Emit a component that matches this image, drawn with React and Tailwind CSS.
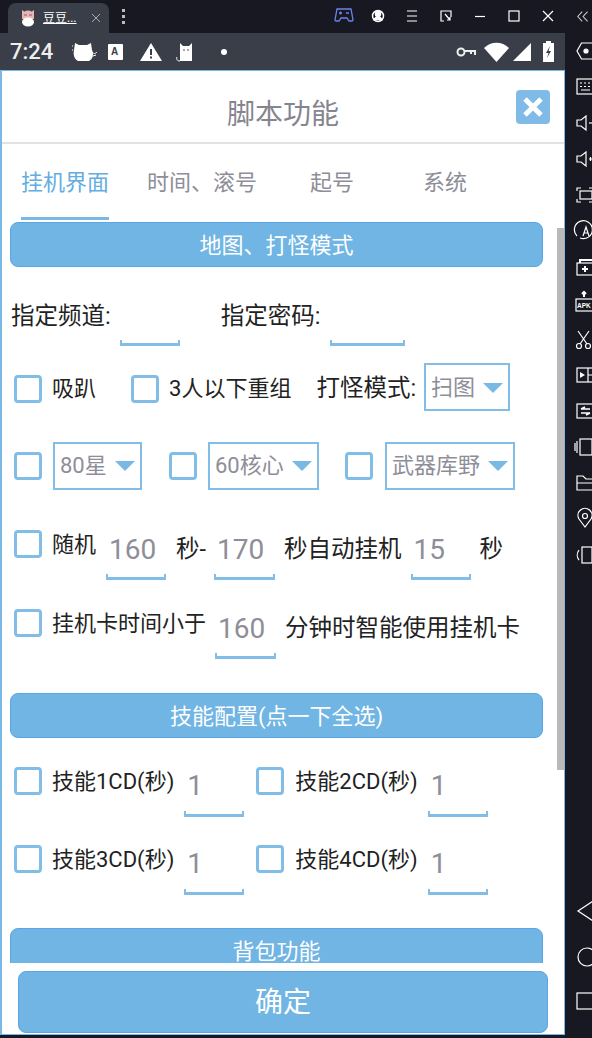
import React from "react";

const blue = "#70b5e3";

function Check({ className = "" }) {
  return <div className={`h-[28px] w-[28px] shrink-0 rounded-[4px] border-[3px] border-[#82bde8] bg-white ${className}`} />;
}

function Label({ children, className = "" }) {
  return <span className={`shrink-0 whitespace-nowrap leading-[30px] text-[#222] ${className}`}>{children}</span>;
}

// underlined input with the small ticks on both ends
function Field({ width, text, pad = "pt-[1px]", className = "" }) {
  return (
    <div className={`flex h-[50px] shrink-0 flex-col justify-end ${width} ${className}`}>
      <div className={`flex-1 pl-[3px] text-[28px] leading-[38px] text-[#8e8e99] ${pad}`}>{text}</div>
      <div className="h-[6px] border-x-2 border-b-[3px] border-[#82bde8]" />
    </div>
  );
}

function Select({ width, text, className = "" }) {
  return (
    <div className={`flex h-[48px] shrink-0 items-center justify-between border-[2px] border-[#82bde8] pl-[5px] pr-[5px] ${width} ${className}`}>
      <span className="whitespace-nowrap text-[22px] text-[#8e8e99]">{text}</span>
      <div className="mt-[1px] h-0 w-0 border-x-[10px] border-t-[10px] border-x-transparent border-t-[#7ab8e5]" />
    </div>
  );
}

function Section({ children, className = "" }) {
  return (
    <div className={`flex h-[45px] w-[533px] shrink-0 items-center justify-center rounded-[8px] border border-[#5aa5e5] pt-[1px] text-[22px] text-white ${className}`} style={{ background: blue }}>
      {children}
    </div>
  );
}

function SideIcon({ children }) {
  return (
    <svg width="27" height="36" viewBox="0 0 27 36" fill="none" stroke="#fff" strokeWidth="1.2">
      {children}
    </svg>
  );
}

const sideIcons = [
  <g key="a"><path d="M28 10H16.5L12 18l4.5 8H28" /><circle cx="21" cy="18" r="2" fill="#fff" /></g>,
  <g key="b"><rect x="12" y="10" width="16" height="15" /><path d="M15 14h2M19 14h2M23 14h2M15 17.500h2M19 17.500h2M23 17.500h2M16 21h9" /></g>,
  <g key="c"><path d="M12 15h4l5-4v14l-5-4h-4z" /><path d="M24 18h3" /></g>,
  <g key="d"><path d="M12 15h4l5-4v14l-5-4h-4z" /><path d="M24 18h3M25.5 16v4" /></g>,
  <g key="e"><path d="M12 14v-3h4M12 22v3h4M24 11h3M24 25h3" /><rect x="15" y="14" width="12" height="8" /></g>,
  <g key="f"><path d="M12 23a9 9 0 1 1 3 2" /><path d="M18 23l3-9 3 9M19 20h4" /></g>,
  <g key="g"><rect x="12" y="14" width="16" height="12" /><path d="M15 14v-3h12M20 17v6M17 20h6" strokeWidth="2" /></g>,
  <g key="h"><rect x="11" y="14" width="17" height="12" /><path d="M19 12V7M17 9l2-2 2 2" strokeWidth="2" /><text x="12" y="23" fill="#fff" stroke="none" fontSize="6.5" fontFamily="Liberation Sans" fontWeight="700">APK</text></g>,
  <g key="i"><circle cx="14" cy="25" r="2.5" /><circle cx="23" cy="25" r="2.5" /><path d="M15 23l9-13M22 23l-9-13" /></g>,
  <g key="j"><rect x="12" y="11" width="16" height="14" /><path d="M23 11v14M23 18h4" /><path d="M15 15l5 3-5 3z" fill="#fff" stroke="none" /></g>,
  <g key="k"><rect x="12" y="11" width="16" height="14" /><path d="M16 16h9M20 14l-4 2M16 20h9M21 22l4-2" strokeWidth="1.6" /></g>,
  <g key="l"><rect x="15" y="10" width="12" height="16" /><path d="M12 12v12M10 14v8" /></g>,
  <g key="m"><path d="M12 11h6l3 3h7v11H12zM12 18h15" /></g>,
  <g key="n"><path d="M20 26l-6-8a7 7 0 1 1 12 0z" /><circle cx="20" cy="15" r="2.5" /></g>,
  <g key="o"><rect x="17" y="10" width="10" height="16" /><path d="M14 13a8 8 0 0 0 0 10" /></g>,
];

function TopBar() {
  const c = "#fff";
  return (
    <div className="flex h-[33px] shrink-0 items-center bg-[#171821]">
      <div className="ml-[8px] flex h-[30px] w-[101px] items-center self-end rounded-t-[8px] bg-[#3a3e48] pl-[13px] pr-[8px]">
        <svg width="14" height="18" viewBox="0 0 14 18">
          <path d="M1 1l3 2h6l3-2v9H1z" fill="#e8b5b0" />
          <ellipse cx="7" cy="6.500" rx="5.500" ry="5" fill="#e8b5b0" />
          <path d="M3 6h3M8 6h3" stroke="#8a5a8a" strokeWidth="1.2" />
          <ellipse cx="7" cy="13" rx="6" ry="4.500" fill="#fff" />
        </svg>
        <span className="ml-[8px] text-[12px] leading-none text-white underline">豆豆...</span>
        <svg className="ml-auto" width="10" height="10" viewBox="0 0 10 10" stroke="#aaa" strokeWidth="1"><path d="M1 1l8 8M9 1l-8 8" /></svg>
      </div>
      <div className="ml-[13px] flex flex-col gap-[3px]">
        <div className="h-[3px] w-[3px] bg-[#bbb]" />
        <div className="h-[3px] w-[3px] bg-[#bbb]" />
        <div className="h-[3px] w-[3px] bg-[#bbb]" />
      </div>
      <div className="ml-auto flex items-center">
        <svg width="34" height="33" viewBox="0 0 34 33" fill="none" stroke="#6b84e8" strokeWidth="1.3">
          <path d="M10 9h14l2 11-1 1h-3l-2-3h-6l-2 3H9l-1-1z" />
          <path d="M12 13h3M13.500 11.500v3M19 13h3" />
        </svg>
        <svg width="34" height="33" viewBox="0 0 34 33" fill="none" stroke={c} strokeWidth="1.5">
          <circle cx="17" cy="16" r="5.500" />
          <circle cx="17" cy="14" r="2.500" fill={c} />
          <path d="M13 19.500a4.500 4.500 0 0 1 8 0z" fill={c} />
        </svg>
        <svg width="34" height="33" viewBox="0 0 34 33" fill="none" stroke={c} strokeWidth="1.2">
          <path d="M12 11h10M12 16h10M12 21h10" />
        </svg>
        <svg width="34" height="33" viewBox="0 0 34 33" fill="none" stroke={c} strokeWidth="1.2">
          <path d="M15 21h-3V11h10v6M16 14l5 6M21 17v3h-3" />
        </svg>
        <svg width="34" height="33" viewBox="0 0 34 33" fill="none" stroke={c} strokeWidth="1.2">
          <path d="M12 16.500h10" />
        </svg>
        <svg width="34" height="33" viewBox="0 0 34 33" fill="none" stroke={c} strokeWidth="1.2">
          <rect x="12" y="11" width="10" height="10" />
        </svg>
        <svg width="34" height="33" viewBox="0 0 34 33" fill="none" stroke={c} strokeWidth="1.2">
          <path d="M12 11l10 10M22 11L12 21" />
        </svg>
        <svg className="ml-[3px]" width="24" height="33" viewBox="0 0 27 33" fill="none" stroke="#ccc" strokeWidth="1.2">
          <path d="M16 11l-5 5.500 5 5.500M22 11l-5 5.500 5 5.500" />
        </svg>
      </div>
    </div>
  );
}

function StatusBar() {
  return (
    <div className="flex h-[37px] shrink-0 items-center bg-[#3a3e48] pl-[10px] text-white">
      <span className="w-[60px] text-[22px] font-medium text-[#eee]">7:24</span>
      <svg className="ml-[1px]" width="26" height="24" viewBox="0 0 26 24" fill="#fff">
        <path d="M4 3l4 2h8l4-2 1 7c2 4 1 9-3 11H7C3 19 2 14 3 10z" />
        <path d="M21 12c2 2 3 2 5 0M22 16l3-1M1 6h1M1 10h1" stroke="#fff" fill="none" />
      </svg>
      <svg className="ml-[11px]" width="16" height="18" viewBox="0 0 16 18">
        <rect width="15" height="16" rx="1" fill="#fff" y="1" />
        <text x="3" y="12" fontSize="10" fontWeight="700" fill="#3a3e48" fontFamily="Liberation Sans">A</text>
      </svg>
      <svg className="ml-[16px]" width="22" height="18" viewBox="0 0 22 18">
        <path d="M11 0l11 18H0z" fill="#fff" />
        <path d="M10 6h2v6h-2zM10 13.500h2v2h-2z" fill="#3a3e48" />
      </svg>
      <svg className="ml-[13px]" width="22" height="20" viewBox="0 0 22 20" fill="#fff">
        <path d="M5 1l3 3h6l3-3v18H5z" />
        <path d="M5 19c-3 0-4-2-3-4" stroke="#fff" fill="none" />
        <circle cx="9" cy="8" r=".8" fill="#3a3e48" />
        <circle cx="13" cy="8" r=".8" fill="#3a3e48" />
      </svg>
      <div className="ml-[24px] h-[6px] w-[6px] rounded-full bg-white" />
      <div className="ml-auto flex items-center pr-[11px]">
        <svg width="20" height="12" viewBox="0 0 20 12" fill="none" stroke="#eee" strokeWidth="2">
          <circle cx="5" cy="6" r="3.500" />
          <path d="M9 5h10v4M15 5v3" />
        </svg>
        <svg className="ml-[8px]" width="25" height="20" viewBox="0 0 25 20" fill="#fff">
          <path d="M0 6c7-7 18-7 25 0L12.500 20z" />
        </svg>
        <svg className="ml-[4px]" width="18" height="18" viewBox="0 0 18 18" fill="#fff">
          <path d="M18 0v18H0z" />
        </svg>
        <svg className="ml-[12px]" width="11" height="21" viewBox="0 0 11 21">
          <path d="M3 0h5v2h3v19H0V2h3z" fill="#fff" />
          <path d="M7 5l-4 7h2.500L4 17l4-7H5.500z" fill="#3a3e48" />
        </svg>
      </div>
    </div>
  );
}

export default function App() {
  return (
    <div className="flex h-[1038px] w-[592px] flex-col overflow-hidden bg-[#171821]" style={{ fontFamily: '"Roboto","Noto Sans CJK SC",sans-serif' }}>
      <TopBar />
      <div className="flex min-h-0 flex-1">
        <div className="flex w-[565px] shrink-0 flex-col">
          <StatusBar />
          <div className="relative flex h-[965px] shrink-0 flex-col border-y border-l-2 border-r border-[#7ab8e5] bg-white">
            {/* header */}
            <div className="relative flex h-[73px] shrink-0 items-center justify-center border-b-2 border-[#e2e2e2]">
              <span className="mt-[16px] text-[28px] text-[#85858f]">脚本功能</span>
              <div className="absolute right-[14px] top-[19px] flex h-[34px] w-[34px] items-center justify-center rounded-[4px] bg-[#7fbbe6]">
                <svg width="24" height="24" viewBox="0 0 24 24" stroke="#fff" strokeWidth="5"><path d="M4 4l16 16M20 4L4 20" /></svg>
              </div>
            </div>
            {/* tabs */}
            <div className="flex h-[76px] shrink-0 items-start pt-[21px] text-[22px] text-[#8e8e99]">
              <div className="ml-[19px] flex h-[55px] w-[88px] flex-col justify-between text-[#63ade0]">
                <span className="whitespace-nowrap leading-[36px]">挂机界面</span>
                <div className="h-[3px] bg-[#7ab8e5]" />
              </div>
              <span className="ml-[38px] whitespace-nowrap leading-[36px]">时间、滚号</span>
              <span className="ml-[53px] whitespace-nowrap leading-[36px]">起号</span>
              <span className="ml-[69px] whitespace-nowrap leading-[36px]">系统</span>
            </div>
            {/* scrolling form */}
            <div className="relative min-h-0 flex-1 overflow-hidden pl-[8px]">
              <Section className="mt-[2px]">地图、打怪模式</Section>

              <div className="mt-[29px] flex h-[50px] items-start">
                <Label className="ml-[1px] mt-[5px] text-[23.5px]">指定频道:</Label>
                <Field width="w-[60px]" className="ml-[9px]" />
                <Label className="ml-[41px] mt-[5px] text-[23.5px]">指定密码:</Label>
                <Field width="w-[75px]" className="ml-[10px]" />
              </div>

              <div className="mt-[17px] flex h-[48px] items-center">
                <Check className="ml-[4px] mt-[4px]" />
                <Label className="ml-[10px] mt-[4px] text-[22px]">吸趴</Label>
                <Check className="ml-[35px] mt-[4px]" />
                <Label className="ml-[10px] mt-[4px] text-[22px]">3人以下重组</Label>
                <Label className="ml-[25px] mt-[2px] text-[23.5px]">打怪模式:</Label>
                <Select width="w-[86px]" text="扫图" className="ml-[8px]" />
              </div>

              <div className="mt-[30px] flex h-[49px] items-center">
                <Check className="ml-[4px]" />
                <Select width="w-[89px]" text="80星" className="ml-[11px]" />
                <Check className="ml-[27px]" />
                <Select width="w-[111px]" text="60核心" className="ml-[11px]" />
                <Check className="ml-[26px]" />
                <Select width="w-[130px]" text="武器库野" className="ml-[12px]" />
              </div>

              <div className="mt-[40px] flex h-[50px] items-start">
                <Check className="ml-[4px]" />
                <Label className="ml-[10px] text-[22px]">随机</Label>
                <Field width="w-[60px]" text="160" className="ml-[10px]" />
                <Label className="ml-[10px] mt-[4px] text-[23.5px]">秒-</Label>
                <Field width="w-[61px]" text="170" className="ml-[8px]" />
                <Label className="ml-[9px] mt-[4px] text-[23.5px]">秒自动挂机</Label>
                <Field width="w-[60px]" text="15" className="ml-[9px]" />
                <Label className="ml-[9px] mt-[4px] text-[23.5px]">秒</Label>
              </div>

              <div className="mt-[29px] flex h-[50px] items-start">
                <Check className="ml-[4px]" />
                <Label className="ml-[10px] text-[22px]">挂机卡时间小于</Label>
                <Field width="w-[61px]" text="160" className="ml-[9px]" />
                <Label className="ml-[9px] mt-[4px] text-[23.5px]">分钟时智能使用挂机卡</Label>
              </div>

              <Section className="mt-[34px]">技能配置(点一下全选)</Section>

              <div className="mt-[29px] flex h-[50px] items-start">
                <Check className="ml-[4px]" />
                <Label className="ml-[10px] text-[22px]">技能1CD(秒)</Label>
                <Field width="w-[60px]" text="1" pad="pt-0" className="ml-[10px]" />
                <Check className="ml-[12px]" />
                <Label className="ml-[11px] text-[22px]">技能2CD(秒)</Label>
                <Field width="w-[60px]" text="1" pad="pt-0" className="ml-[10px]" />
              </div>

              <div className="mt-[28px] flex h-[50px] items-start">
                <Check className="ml-[4px]" />
                <Label className="ml-[10px] text-[22px]">技能3CD(秒)</Label>
                <Field width="w-[60px]" text="1" pad="pt-0" className="ml-[10px]" />
                <Check className="ml-[12px]" />
                <Label className="ml-[11px] text-[22px]">技能4CD(秒)</Label>
                <Field width="w-[60px]" text="1" pad="pt-0" className="ml-[10px]" />
              </div>

              <Section className="mt-[33px]">背包功能</Section>

              <div className="absolute right-0 top-[8px] h-[542px] w-[7px] bg-[#b9b9b9]" />
            </div>
            {/* footer */}
            <div className="flex h-[71px] shrink-0 items-start bg-white pl-[16px] pt-[8px]">
              <div className="flex h-[62px] w-[530px] items-center justify-center rounded-[8px] border border-[#5aa5e5] pt-[2px] text-[28px] text-white" style={{ background: blue }}>
                确定
              </div>
            </div>
          </div>
        </div>
        {/* emulator side bar */}
        <div className="flex w-[27px] shrink-0 flex-col overflow-hidden">
          {sideIcons.map((icon, i) => (
            <SideIcon key={i}>{icon}</SideIcon>
          ))}
          <div className="mt-auto flex flex-col gap-[8px] pb-[19px]">
            <SideIcon><path d="M28 6L13 16l15 10" /></SideIcon>
            <SideIcon><circle cx="22" cy="18" r="9" /></SideIcon>
            <SideIcon><rect x="12" y="10" width="16" height="16" /></SideIcon>
          </div>
        </div>
      </div>
    </div>
  );
}
